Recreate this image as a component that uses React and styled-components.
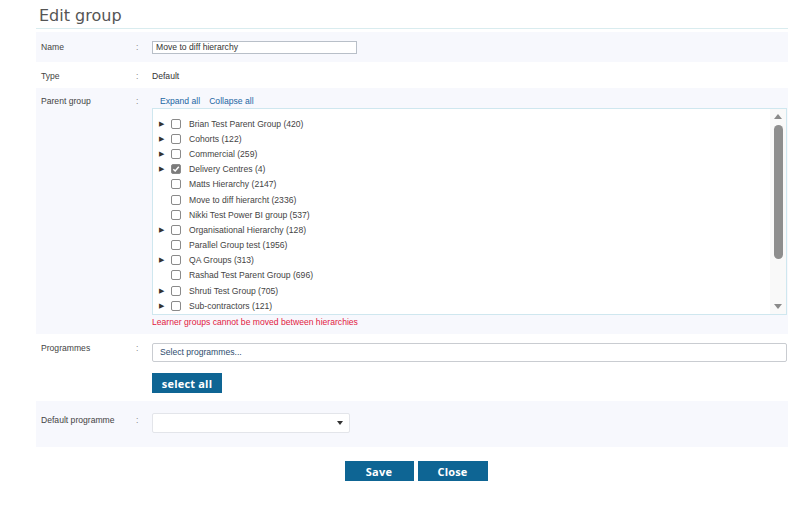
import React from 'react'
import styled, { createGlobalStyle } from 'styled-components'

const GlobalStyle = createGlobalStyle`
  html, body { margin: 0; padding: 0; background: #ffffff; }
  body { font-family: "Liberation Sans", Arial, sans-serif; color: #444; }
`

const Page = styled.div`
  width: 800px;
  height: 505px;
  padding: 0 12px 0 36px;
  box-sizing: border-box;
`

const Title = styled.h1`
  margin: 0;
  padding: 6px 0 0 3px;
  height: 22px;
  font-family: "DejaVu Sans", Verdana, sans-serif;
  font-weight: normal;
  font-size: 16px;
  color: #555;
  border-bottom: 1px solid #d9ecef;
`

const Form = styled.div`
  margin-top: 3px;
  display: flex;
  flex-direction: column;
`

const Row = styled.div`
  display: grid;
  grid-template-columns: 100px 16px 1fr;
  background: ${p => (p.$shade ? '#f7f8fd' : '#ffffff')};
  height: ${p => p.$h}px;
  padding-top: ${p => p.$pt || 0}px;
  box-sizing: border-box;
  font-size: 8.6px;
`

const Label = styled.div`
  padding-left: 5px;
  color: #444;
  line-height: ${p => p.$lh || 12}px;
`

const Colon = styled.div`
  color: #888;
  line-height: ${p => p.$lh || 12}px;
`

const Value = styled.div`
  display: flex;
  flex-direction: column;
  align-items: flex-start;
`

const TextInput = styled.div`
  width: 205px;
  height: 13px;
  border: 1px solid #b8bfc8;
  box-sizing: border-box;
  padding-left: 3px;
  line-height: 11px;
  color: #333;
  background: #fff;
`

const Plain = styled.div`
  color: #333;
  line-height: 12px;
`

const Links = styled.div`
  display: flex;
  gap: 9px;
  padding: 1px 0 0 8px;
  height: 12px;
  line-height: 11px;
`

const Link = styled.span`
  color: #2366a3;
`

const TreeBox = styled.div`
  width: 635px;
  height: 207px;
  border: 1px solid #cfe7ef;
  box-sizing: border-box;
  background: #fff;
  display: flex;
  overflow: hidden;
`

const TreeList = styled.div`
  flex: 1;
  padding: 7px 0 0 6px;
`

const TreeRow = styled.div`
  display: flex;
  align-items: center;
  height: 15.2px;
  color: #444;
`

const Caret = styled.span`
  width: 12px;
  display: flex;
  align-items: center;
  justify-content: flex-start;
  font-size: 7px;
  color: #333;
`

const Box = styled.span`
  width: 10px;
  height: 10px;
  box-sizing: border-box;
  border: 1px solid #8a8a8a;
  border-radius: 2px;
  background: ${p => (p.$on ? '#7a7a7a' : '#fff')};
  display: flex;
  align-items: center;
  justify-content: center;
  margin-right: 8px;
`

const ScrollTrack = styled.div`
  width: 16px;
  background: #f9f9f9;
  display: flex;
  flex-direction: column;
  align-items: center;
  padding: 5px 0 5px;
  box-sizing: border-box;
`

const Arrow = styled.div`
  width: 0;
  height: 0;
  border-left: ${p => p.$s || 4}px solid transparent;
  border-right: ${p => p.$s || 4}px solid transparent;
  ${p => (p.$down
    ? `border-top: ${(p.$s || 4) + 1}px solid ${p.$c || '#8a8a8a'};`
    : `border-bottom: ${(p.$s || 4) + 1}px solid ${p.$c || '#8a8a8a'};`)}
`

const Thumb = styled.div`
  width: 9px;
  height: 134px;
  background: #8e8e8e;
  border-radius: 5px;
  margin: 6px 0 auto;
`

const ErrorText = styled.div`
  color: #e2203f;
  padding-top: 1px;
  line-height: 12px;
`

const MultiSelect = styled.div`
  width: 635px;
  height: 19px;
  border: 1px solid #c9ccd1;
  border-radius: 2px;
  box-sizing: border-box;
  background: #fff;
  padding-left: 7px;
  line-height: 17px;
  color: #2e4d6e;
`

const Button = styled.button`
  background: #0e6594;
  color: #fff;
  border: none;
  font-family: "Open Sans", "Liberation Sans", sans-serif;
  font-weight: bold;
  font-size: 11px;
  height: ${p => p.$h || 19}px;
  width: ${p => p.$w}px;
  padding: 0;
  margin-top: ${p => p.$mt || 0}px;
  letter-spacing: 0.2px;
`

const Select = styled.div`
  width: 198px;
  height: 20px;
  border: 1px solid #e3e5ea;
  border-radius: 2px;
  box-sizing: border-box;
  background: #fff;
  display: flex;
  align-items: center;
  justify-content: flex-end;
  padding-right: 6px;
`

const Footer = styled.div`
  display: flex;
  justify-content: center;
  gap: 4px;
  padding: 14px 0 0 8px;
`

const groups = [
  ['Brian Test Parent Group (420)', true, false],
  ['Cohorts (122)', true, false],
  ['Commercial (259)', true, false],
  ['Delivery Centres (4)', true, true],
  ['Matts Hierarchy (2147)', false, false],
  ['Move to diff hierarcht (2336)', false, false],
  ['Nikki Test Power BI group (537)', false, false],
  ['Organisational Hierarchy (128)', true, false],
  ['Parallel Group test (1956)', false, false],
  ['QA Groups (313)', true, false],
  ['Rashad Test Parent Group (696)', false, false],
  ['Shruti Test Group (705)', true, false],
  ['Sub-contractors (121)', true, false],
]

const Check = () => (
  <svg width="8" height="8" viewBox="0 0 8 8">
    <path d="M1.3 4.2 L3.2 6 L6.8 1.8" fill="none" stroke="#fff" strokeWidth="1.5" />
  </svg>
)

export default function App() {
  return (
    <Page>
      <GlobalStyle />
      <Title>Edit group</Title>
      <Form>
        <Row $shade $h={30} $pt={9}>
          <Label>Name</Label>
          <Colon>:</Colon>
          <Value>
            <TextInput>Move to diff hierarchy</TextInput>
          </Value>
        </Row>
        <Row $h={26} $pt={8}>
          <Label>Type</Label>
          <Colon>:</Colon>
          <Value>
            <Plain>Default</Plain>
          </Value>
        </Row>
        <Row $shade $h={246} $pt={7}>
          <Label>Parent group</Label>
          <Colon>:</Colon>
          <Value>
            <Links>
              <Link>Expand all</Link>
              <Link>Collapse all</Link>
            </Links>
            <TreeBox>
              <TreeList>
                {groups.map(([name, kids, on]) => (
                  <TreeRow key={name}>
                    <Caret>{kids ? '▶' : ''}</Caret>
                    <Box $on={on}>{on && <Check />}</Box>
                    {name}
                  </TreeRow>
                ))}
              </TreeList>
              <ScrollTrack>
                <Arrow />
                <Thumb />
                <Arrow $down />
              </ScrollTrack>
            </TreeBox>
            <ErrorText>Learner groups cannot be moved between hierarchies</ErrorText>
          </Value>
        </Row>
        <Row $h={67} $pt={9}>
          <Label $lh={10}>Programmes</Label>
          <Colon $lh={10}>:</Colon>
          <Value>
            <MultiSelect>Select programmes...</MultiSelect>
            <Button $w={70} $h={20} $mt={11}>select all</Button>
          </Value>
        </Row>
        <Row $shade $h={46} $pt={12}>
          <Label $lh={14}>Default programme</Label>
          <Colon $lh={14}>:</Colon>
          <Value>
            <Select>
              <Arrow $down $s={3} $c="#333" />
            </Select>
          </Value>
        </Row>
      </Form>
      <Footer>
        <Button $w={69} $h={20}>Save</Button>
        <Button $w={70} $h={20}>Close</Button>
      </Footer>
    </Page>
  )
}
